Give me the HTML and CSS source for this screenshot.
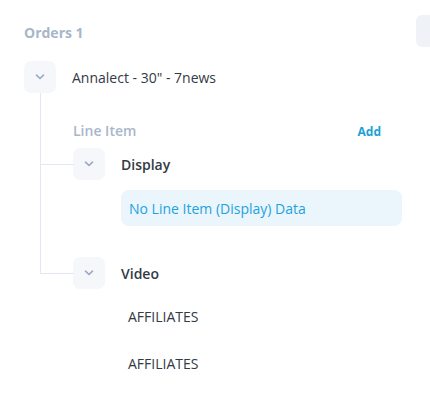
FILE: index.html
```html
<!DOCTYPE html>
<html>
<head>
<meta charset="utf-8">
<link rel="stylesheet" href="styles.css">
</head>
<body>
<div class="page">
  <div class="header">
    <div class="title">Orders 1</div>
    <div class="side-btn"><span class="dot"></span><span class="dot"></span></div>
  </div>
  <div class="order">
    <div class="row">
      <div class="toggle"><svg width="10" height="6" viewBox="0 0 10 6"><path d="M1.5 1.2 L5 4.5 L8.5 1.2" fill="none" stroke="#9aa9c2" stroke-width="1.6" stroke-linecap="round" stroke-linejoin="round"/></svg></div>
      <div class="order-name">Annalect - 30" - 7news</div>
    </div>
    <div class="children">
      <div class="section-head">
        <span class="section-title">Line Item</span>
        <span class="add">Add</span>
      </div>
      <div class="node">
        <div class="row">
          <div class="toggle"><svg width="10" height="6" viewBox="0 0 10 6"><path d="M1.5 1.2 L5 4.5 L8.5 1.2" fill="none" stroke="#9aa9c2" stroke-width="1.6" stroke-linecap="round" stroke-linejoin="round"/></svg></div>
          <div class="node-name">Display</div>
        </div>
        <div class="node-body">
          <div class="empty">No Line Item (Display) Data</div>
        </div>
      </div>
      <div class="node last">
        <div class="row">
          <div class="toggle"><svg width="10" height="6" viewBox="0 0 10 6"><path d="M1.5 1.2 L5 4.5 L8.5 1.2" fill="none" stroke="#9aa9c2" stroke-width="1.6" stroke-linecap="round" stroke-linejoin="round"/></svg></div>
          <div class="node-name">Video</div>
        </div>
        <div class="node-body items">
          <div class="item">AFFILIATES</div>
          <div class="item">AFFILIATES</div>
        </div>
      </div>
    </div>
  </div>
</div>
</body>
</html>
```

FILE: styles.css
```css
html, body {
  margin: 0;
  padding: 0;
  background: #ffffff;
  overflow: hidden;
}
body {
  font-family: "Open Sans", "Noto Sans", sans-serif;
  color: #333a44;
  width: 430px;
  height: 404px;
}
.page {
  padding: 15px 28px 0 24px;
}
.header {
  display: flex;
  align-items: center;
  height: 32px;
}
.title {
  font-size: 14px;
  font-weight: 700;
  color: #a9b5ca;
  padding-top: 2px;
}
.side-btn {
  margin-left: auto;
  margin-right: -46px;
  width: 32px;
  height: 32px;
  border-radius: 6px;
  background: #eff2f7;
  display: flex;
  flex-direction: column;
  align-items: center;
  justify-content: center;
  gap: 5px;
}
.dot {
  width: 2px;
  height: 2px;
  background: #8e9ab0;
}
.order {
  margin-top: 14px;
}
.row {
  display: flex;
  align-items: center;
  gap: 16px;
  height: 32px;
}
.toggle {
  width: 32px;
  height: 32px;
  border-radius: 7px;
  background: #f5f7fa;
  display: flex;
  align-items: center;
  justify-content: center;
  flex: none;
}
.order-name {
  font-size: 14px;
  color: #333a44;
}
.children {
  margin-left: 16px;
}
.section-head {
  border-left: 1px solid #e1e8f3;
  padding: 28px 21px 7px 32px;
  display: flex;
  align-items: center;
  justify-content: space-between;
}
.section-title {
  font-size: 14px;
  font-weight: 600;
  color: #aab6cb;
  line-height: 20px;
}
.add {
  font-size: 12px;
  font-weight: 700;
  color: #1d9fd8;
}
.node {
  position: relative;
  padding-left: 33px;
  padding-bottom: 31px;
}
.node::before {
  content: "";
  position: absolute;
  left: 0;
  top: 0;
  width: 33px;
  height: 16px;
  border-left: 1px solid #e1e8f3;
  border-bottom: 1px solid #e1e8f3;
}
.node::after {
  content: "";
  position: absolute;
  left: 0;
  top: 0;
  bottom: 0;
  border-left: 1px solid #e1e8f3;
}
.node.last::after {
  display: none;
}
.node.last {
  padding-bottom: 0;
}
.node-name {
  font-size: 14px;
  font-weight: 600;
  color: #333a44;
}
.node-body {
  padding-left: 48px;
  padding-top: 10px;
}
.empty {
  height: 36px;
  border-radius: 8px;
  background: #eaf5fc;
  color: #1ea3dc;
  font-size: 14px;
  display: flex;
  align-items: center;
  padding-left: 8px;
}
.items {
  padding-top: 18px;
  display: flex;
  flex-direction: column;
  gap: 27px;
}
.item {
  padding-left: 7px;
  font-size: 14px;
  line-height: 20px;
  color: #333a44;
}
```
